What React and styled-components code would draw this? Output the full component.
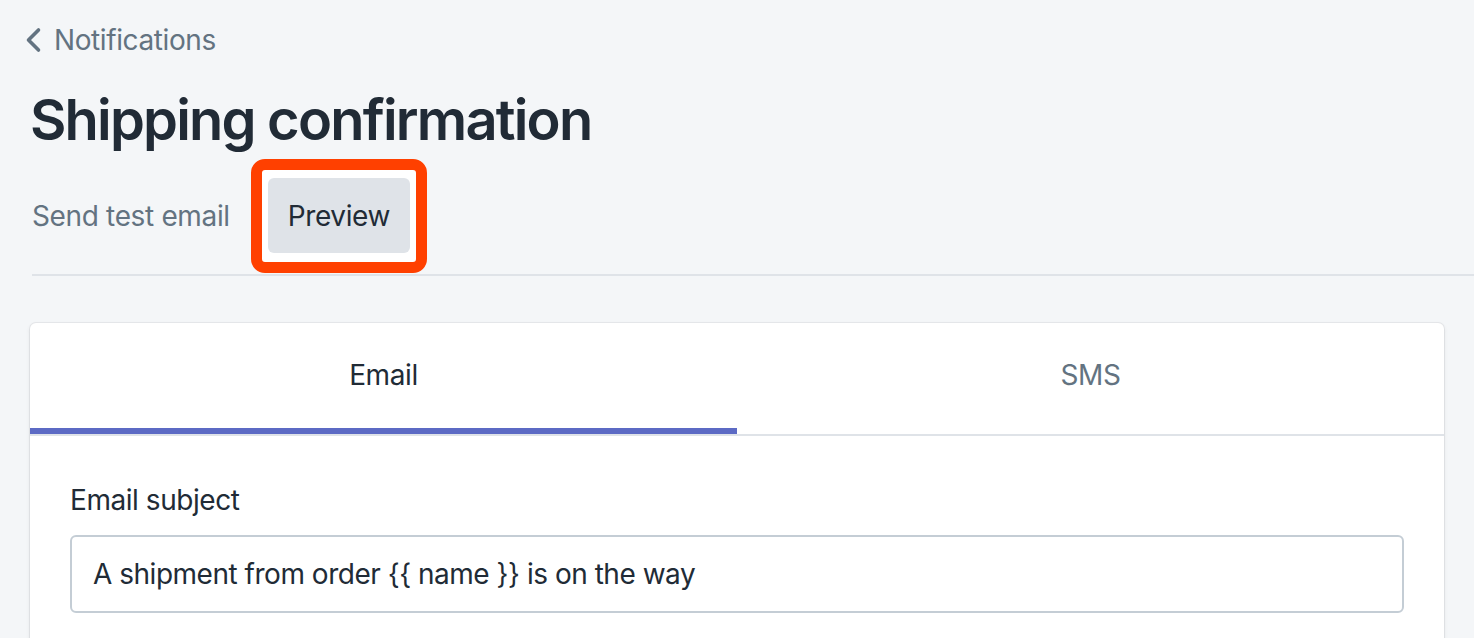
import React from 'react';
import styled, { createGlobalStyle } from 'styled-components';

const GlobalStyle = createGlobalStyle`
  html, body {
    margin: 0;
    padding: 0;
    background: #f4f6f8;
    font-family: 'Inter', 'Noto Sans', sans-serif;
    color: #212b36;
    -webkit-font-smoothing: antialiased;
  }
  * {
    box-sizing: border-box;
  }
`;

const Page = styled.div`
  padding: 20px 30px 0 30px;
  overflow: hidden;
`;

const Breadcrumb = styled.a`
  display: inline-flex;
  align-items: center;
  gap: 12px;
  margin-left: -6px;
  height: 40px;
  font-size: 28px;
  line-height: 40px;
  letter-spacing: -0.4px;
  color: #637381;
  text-decoration: none;
  cursor: pointer;
`;

const Title = styled.h1`
  margin: 28px 0 0 0;
  font-size: 56px;
  line-height: 64px;
  font-weight: 600;
  letter-spacing: -1.8px;
  color: #212b36;
`;

const Actions = styled.div`
  display: flex;
  align-items: center;
  gap: 38px;
  margin-top: 26px;
  height: 75px;
`;

const PlainAction = styled.button`
  border: none;
  background: transparent;
  padding: 0 0 0 2px;
  font-family: inherit;
  font-size: 28px;
  line-height: 40px;
  letter-spacing: -0.35px;
  color: #637381;
  cursor: pointer;
`;

const HighlightWrap = styled.div`
  position: relative;
  isolation: isolate;
`;

const Highlight = styled.span`
  position: absolute;
  top: -19px;
  bottom: -20px;
  left: -17px;
  right: -17px;
  border: 11px solid #ff4000;
  border-radius: 14px;
  background: #fff;
  z-index: 0;
`;

const ActionButton = styled.button`
  position: relative;
  z-index: 1;
  height: 75px;
  padding: 0 20px;
  border: none;
  border-radius: 6px;
  background: ${(p) => (p.active ? '#dfe3e8' : 'transparent')};
  font-family: inherit;
  font-size: 28px;
  line-height: 40px;
  letter-spacing: -0.4px;
  color: #212b36;
  cursor: pointer;
`;

const Divider = styled.hr`
  margin: 21px -30px 0 2px;
  border: none;
  border-top: 2px solid #dfe3e8;
`;

const Card = styled.div`
  margin-top: 47px;
  background: #fff;
  border-radius: 6px 6px 0 0;
  box-shadow: 0 0 0 1px rgba(63, 63, 68, 0.07), 0 2px 4px rgba(63, 63, 68, 0.12);
  height: 400px;
`;

const TabList = styled.div`
  display: grid;
  grid-template-columns: 1fr 1fr;
  border-bottom: 2px solid #dfe3e8;
`;

const Tab = styled.button`
  height: 111px;
  padding: 0 0 2px 0;
  border: none;
  border-bottom: 6px solid ${(p) => (p.active ? '#5c6ac4' : 'transparent')};
  background: transparent;
  font-family: inherit;
  font-size: 28px;
  line-height: 40px;
  letter-spacing: -0.4px;
  color: ${(p) => (p.active ? '#212b36' : '#637381')};
  cursor: pointer;
`;

const Section = styled.div`
  padding: 44px 40px 40px 40px;
`;

const Label = styled.label`
  display: block;
  font-size: 28px;
  line-height: 40px;
  letter-spacing: -0.45px;
  color: #212b36;
  margin-bottom: 15px;
`;

const Input = styled.input`
  display: block;
  width: 100%;
  height: 78px;
  padding: 0 21px;
  border: 2px solid #c4cdd5;
  border-radius: 6px;
  background: #fff;
  font-family: inherit;
  font-size: 28px;
  letter-spacing: -0.48px;
  color: #212b36;
  outline: none;
`;

const ChevronLeft = () => (
  <svg width="18" height="26" viewBox="0 0 18 26" fill="none">
    <path
      d="M14.5 3 L4.5 13 L14.5 23"
      stroke="#637381"
      strokeWidth="3.6"
      strokeLinecap="round"
      strokeLinejoin="round"
    />
  </svg>
);

const App = () => (
  <>
    <GlobalStyle />
    <Page>
      <Breadcrumb>
        <ChevronLeft />
        Notifications
      </Breadcrumb>
      <Title>Shipping confirmation</Title>
      <Actions>
        <PlainAction>Send test email</PlainAction>
        <HighlightWrap>
          <Highlight />
          <ActionButton active>Preview</ActionButton>
        </HighlightWrap>
      </Actions>
      <Divider />
      <Card>
        <TabList>
          <Tab active>Email</Tab>
          <Tab>SMS</Tab>
        </TabList>
        <Section>
          <Label>Email subject</Label>
          <Input readOnly value="A shipment from order {{ name }} is on the way" />
        </Section>
      </Card>
    </Page>
  </>
);

export default App;
